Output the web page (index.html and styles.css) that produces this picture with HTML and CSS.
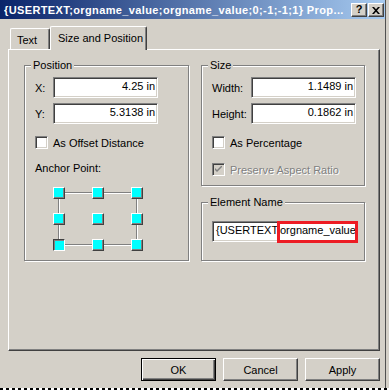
FILE: index.html
```html
<!DOCTYPE html>
<html>
<head>
<meta charset="utf-8">
<link rel="stylesheet" href="styles.css">
</head>
<body>
<div class="screen">
  <div class="window">
    <div class="titlebar">
      <div class="title">{USERTEXT;orgname_value;orgname_value;0;-1;-1;1} Prop...</div>
      <div class="tbtn help">?</div>
      <div class="tbtn close">
        <svg width="8" height="7" viewBox="0 0 8 7"><path d="M0 0h2l2 2.3 2-2.3h2L5 3.5 8 7H6L4 4.7 2 7H0l3-3.5z" fill="#000"/></svg>
      </div>
    </div>
    <div class="client">
      <div class="tabs">
        <div class="tab">Text</div>
        <div class="tab active">Size and Position</div>
      </div>
      <div class="panel">
        <div class="group pos">
          <div class="legend">Position</div>
          <div class="row first"><span class="lbl lbl-xy">X:</span><div class="edit w105">4.25 in</div></div>
          <div class="row"><span class="lbl lbl-xy">Y:</span><div class="edit w105">5.3138 in</div></div>
          <div class="check-row cb-offset"><span class="cb"></span><span>As Offset Distance</span></div>
          <div class="anchor-label">Anchor Point:</div>
          <div class="anchor">
            <span class="node"></span><span class="node"></span><span class="node"></span>
            <span class="node"></span><span class="node"></span><span class="node"></span>
            <span class="node sel"></span><span class="node"></span><span class="node"></span>
          </div>
        </div>
        <div class="right-col">
          <div class="group size">
            <div class="legend">Size</div>
            <div class="row first"><span class="lbl lbl-wh">Width:</span><div class="edit w105">1.1489 in</div></div>
            <div class="row"><span class="lbl lbl-wh">Height:</span><div class="edit w105">0.1862 in</div></div>
            <div class="check-row cb-pct"><span class="cb"></span><span>As Percentage</span></div>
            <div class="check-row cb-ratio disabled"><span class="cb checked"><svg width="7" height="7" viewBox="0 0 7 7"><path d="M0 2l2 2 5-5v2L2 6 0 4z" fill="#808080"/></svg></span><span class="dtext">Preserve Aspect Ratio</span></div>
          </div>
          <div class="group elname">
            <div class="legend">Element Name</div>
            <div class="name-wrap">
              <div class="edit name">{USERTEXT;orgname_value</div>
              <div class="mark"></div>
            </div>
          </div>
        </div>
      </div>
      <div class="actions">
        <div class="btn default">OK</div>
        <div class="btn">Cancel</div>
        <div class="btn">Apply</div>
      </div>
    </div>
  </div>
  <div class="dash"></div>
</div>
</body>
</html>
```
FILE: styles.css
```css
* { box-sizing: border-box; }
html, body { margin: 0; padding: 0; background: #d4d0c8; }
body { font-family: "Liberation Sans", Arial, sans-serif; font-size: 11px; color: #000; }

.screen { width: 389px; height: 390px; display: flex; flex-direction: column; background: #d4d0c8; overflow: hidden; }
.window { width: 386px; height: 388px; border-right: 1px solid #505050; display: flex; flex-direction: column; }

.titlebar {
  height: 19px; display: flex; align-items: center; padding: 0 1px 0 4px;
  background: linear-gradient(to right, #0a246a, #a6caf0);
}
.title { flex: 1; color: #fff; font-weight: bold; font-size: 11px; letter-spacing: 0.38px; white-space: nowrap; overflow: hidden; }
.tbtn {
  width: 16px; height: 14px; background: #d4d0c8; display: flex; align-items: center; justify-content: center;
  border-top: 1px solid #fff; border-left: 1px solid #fff; border-right: 1px solid #404040; border-bottom: 1px solid #404040;
  box-shadow: inset -1px -1px 0 #808080;
  font-weight: bold; font-size: 11px; line-height: 1;
}
.tbtn.help { margin-right: 1px; }
.tbtn.close svg { display: block; margin-top: 1px; }

.client { padding: 7px 0 0 8px; display: flex; flex-direction: column; }

.tabs { display: flex; align-items: flex-end; height: 23px; padding-left: 2px; position: relative; z-index: 1; }
.tab {
  height: 21px; width: 40px; padding-left: 6px; display: flex; align-items: center; padding-top: 2px;
  border-top: 1px solid #fff; border-left: 1px solid #fff; border-right: 1px solid #404040;
  box-shadow: inset -1px 0 0 #808080; border-radius: 2px 2px 0 0; background: #d4d0c8;
}
.tab.active { height: 24px; width: 97px; margin-bottom: -1px; padding-left: 7px; padding-top: 0; padding-bottom: 1px; }

.panel {
  width: 372px; height: 302px; display: flex; gap: 12px; padding: 15px 0 0 15px;
  border-top: 1px solid #fff; border-left: 1px solid #fff; border-right: 1px solid #404040; border-bottom: 1px solid #404040;
  box-shadow: inset -1px -1px 0 #808080;
}

.group {
  border: 1px solid #808080; box-shadow: 1px 1px 0 #fff, inset 1px 1px 0 #fff;
  display: flex; flex-direction: column; padding-left: 10px;
}
.legend {
  align-self: flex-start; height: 13px; line-height: 13px; margin: -7px 0 0 -4px; padding: 0 2px; background: #d4d0c8;
}
.group.pos { width: 165px; height: 196px; }
.right-col { display: flex; flex-direction: column; gap: 16px; }
.group.size { width: 164px; height: 121px; }
.group.elname { width: 164px; height: 59px; }

.row { display: flex; align-items: center; margin-top: 5px; }
.row.first { margin-top: 5px; }
.lbl-xy { width: 18px; }
.lbl-wh { width: 39px; }

.edit {
  height: 21px; background: #fff; line-height: 17px; padding: 0 2px; white-space: nowrap; overflow: hidden;
  border-top: 1px solid #808080; border-left: 1px solid #808080; border-right: 1px solid #fff; border-bottom: 1px solid #fff;
  box-shadow: inset 1px 1px 0 #404040, inset -1px -1px 0 #d4d0c8;
}
.w105 { width: 105px; text-align: right; }

.check-row { display: flex; align-items: center; gap: 5px; height: 13px; }
.cb {
  width: 13px; height: 13px; background: #fff; display: flex; align-items: center; justify-content: center;
  border-top: 1px solid #808080; border-left: 1px solid #808080; border-right: 1px solid #fff; border-bottom: 1px solid #fff;
  box-shadow: inset 1px 1px 0 #404040, inset -1px -1px 0 #d4d0c8;
}
.cb svg { display: block; }
.cb-offset { margin-top: 12px; }
.cb-pct { margin-top: 12px; }
.cb-ratio { margin-top: 14px; }
.disabled .cb { background: #d4d0c8; }
.dtext { color: #808080; text-shadow: 1px 1px 0 #fff; }

.anchor-label { margin-top: 13px; line-height: 13px; }
.anchor {
  position: relative; margin: 12px 0 0 18px; width: 90px; height: 64px;
  display: grid; grid-template-columns: 12px 12px 12px; grid-template-rows: 12px 12px 12px;
  column-gap: 27px; row-gap: 14px;
}
.anchor::before {
  content: ""; position: absolute; left: 5px; top: 5px; right: 6px; bottom: 6px;
  border: 1px solid #808080; box-shadow: 1px 1px 0 #fff, inset 1px 1px 0 #fff;
}
.node {
  position: relative; width: 12px; height: 12px; background: #00ffff;
  border-top: 1px solid #fff; border-left: 1px solid #fff; border-right: 1px solid #404040; border-bottom: 1px solid #404040;
  box-shadow: inset -1px -1px 0 #808080;
}
.node.sel {
  border-top: 1px solid #404040; border-left: 1px solid #404040; border-right: 1px solid #fff; border-bottom: 1px solid #fff;
  box-shadow: inset 1px 1px 0 #808080;
}

.name-wrap { position: relative; margin-top: 12px; width: 145px; height: 21px; }
.edit.name { width: 145px; padding-left: 3px; }
.mark { position: absolute; left: 65px; top: 0; width: 81px; height: 22px; border: 3px solid #ed1c24; }

.actions { display: flex; justify-content: flex-end; gap: 7px; width: 372px; margin-top: 7px; }
.btn {
  width: 75px; height: 23px; display: flex; align-items: center; justify-content: center;
  border-top: 1px solid #fff; border-left: 1px solid #fff; border-right: 1px solid #404040; border-bottom: 1px solid #404040;
  box-shadow: inset -1px -1px 0 #808080;
}
.btn.default { border: 1px solid #000; box-shadow: inset 1px 1px 0 #fff, inset -1px -1px 0 #404040, inset -2px -2px 0 #808080; }

.dash { height: 2px; width: 389px; background: repeating-linear-gradient(to right, #000 0 3px, #fff 3px 6px); }
```
